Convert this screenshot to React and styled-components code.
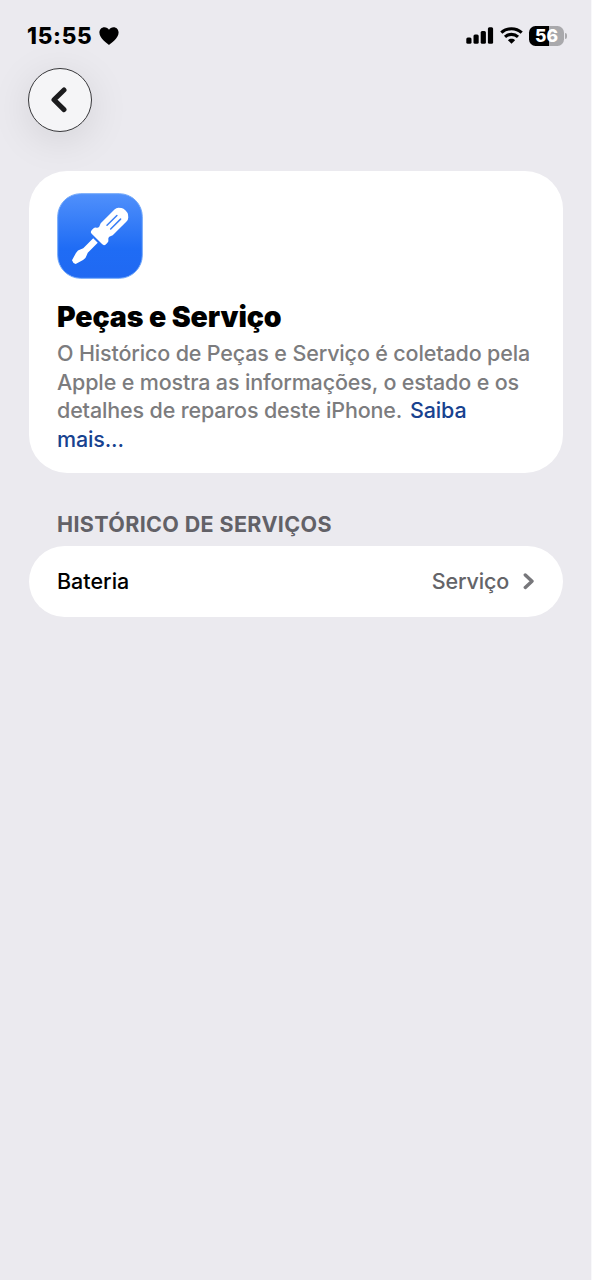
import React from "react";
import styled, { createGlobalStyle } from "styled-components";

const GlobalStyle = createGlobalStyle`
  * { box-sizing: border-box; }
  body { margin: 0; background: #ebeaef; }
`;

const Screen = styled.main`
  min-height: 1280px;
  padding: 0 28px 0 29px;
  background: #ebeaef;
  border-right: 1px solid #f8f8fa;
  font-family: Inter, "Liberation Sans", sans-serif;
  color: #000;
`;

const StatusBar = styled.header`
  display: flex;
  justify-content: space-between;
  align-items: center;
  height: 68px;
  padding-top: 3px;
  margin: 0 -4px 0 -2px;
`;

const StatusGroup = styled.div`
  display: flex;
  align-items: center;
  gap: ${(p) => p.$gap}px;
`;

const Clock = styled.time`
  font-size: 22.5px;
  line-height: 28px;
  font-weight: 800;
  letter-spacing: 0.7px;
`;

const Battery = styled.div`
  display: flex;
  align-items: center;
  gap: 1px;
`;

const BatteryBody = styled.div`
  width: 35px;
  height: 20px;
  border-radius: 6.5px;
  background: linear-gradient(90deg, #000 56%, #a9a9ac 56%);
  color: #fff;
  font-size: 17.5px;
  line-height: 20px;
  font-weight: 800;
  text-align: center;
`;

const BatteryCap = styled.div`
  width: 2px;
  height: 6px;
  border-radius: 0 2px 2px 0;
  background: #a9a9ac;
`;

const BackButton = styled.button`
  display: flex;
  align-items: center;
  justify-content: center;
  width: 64px;
  height: 64px;
  margin: 0 0 39px -1px;
  padding: 0 3px 0 0;
  border: 1.5px solid #38383b;
  border-radius: 50%;
  background: #f5f5f7;
  box-shadow: 0 8px 40px rgba(0, 0, 0, 0.1);
`;

const Card = styled.section`
  height: 302px;
  padding: 22px 28px 0;
  border-radius: 38px;
  background: #fff;
`;

const AppIcon = styled.svg`
  display: block;
  width: 86px;
  height: 86px;
`;

const Title = styled.h1`
  margin: 20px 0 0;
  font-size: 28.5px;
  line-height: 36px;
  font-weight: 900;
  letter-spacing: -0.1px;
`;

const Description = styled.p`
  margin: 4px -10px 0 0;
  color: #7c7c7e;
  font-size: 21.5px;
  line-height: 28.5px;
  font-weight: 500;
  letter-spacing: -0.15px;
  white-space: nowrap;
`;

const Link = styled.a`
  margin-left: ${(p) => (p.$inline ? 2.5 : 0)}px;
  color: #18428f;
`;

const SectionTitle = styled.h2`
  margin: 38px 28px 8px;
  color: #626167;
  font-size: 21.5px;
  line-height: 27px;
  font-weight: 700;
  letter-spacing: 0.36px;
`;

const Row = styled.div`
  display: flex;
  align-items: center;
  height: 71px;
  padding: 0 28px;
  border-radius: 36px;
  background: #fff;
  font-size: 21.5px;
  line-height: 27px;
  font-weight: 500;
`;

const RowValue = styled.span`
  margin-left: auto;
  margin-right: 14px;
  color: #646468;
  letter-spacing: -0.15px;
`;

function Heart() {
  return (
    <svg width="20" height="18" viewBox="0 0 20 18">
      <path d="M10 18C8.5 17 0.4 11.5 0.4 5.6C0.4 2.3 2.7 0.2 5.4 0.2C7.5 0.2 9.1 1.2 10 2.8C10.9 1.2 12.5 0.2 14.6 0.2C17.3 0.2 19.6 2.3 19.6 5.6C19.6 11.5 11.5 17 10 18Z" />
    </svg>
  );
}

function Signal() {
  return (
    <svg width="28" height="17" viewBox="0 0 28 17">
      <rect x="0.3" y="10.5" width="5.2" height="6.3" rx="1.5" />
      <rect x="7.5" y="7.5" width="5.2" height="9.3" rx="1.5" />
      <rect x="14.7" y="4" width="5.2" height="12.8" rx="1.5" />
      <rect x="21.9" y="0.3" width="5.2" height="16.5" rx="1.5" />
    </svg>
  );
}

function Wifi() {
  return (
    <svg width="23" height="17" viewBox="0 0 23 17">
      <g fill="none" stroke="#000" strokeWidth="3.1">
        <path d="M1.3 5.7C7 0.4 16 0.4 21.7 5.7" />
        <path d="M5 9.8C8.7 6.5 14.3 6.5 18 9.8" />
      </g>
      <path d="M11.5 16.8L7.9 13.2C9.8 11.4 13.2 11.4 15.1 13.2Z" />
    </svg>
  );
}

function Screwdriver() {
  return (
    <AppIcon viewBox="0 0 86 86">
      <defs>
        <linearGradient id="iconFill" x1="0" y1="0" x2="0" y2="1">
          <stop offset="0" stopColor="#5090fb" />
          <stop offset="0.65" stopColor="#1f6cf5" />
          <stop offset="1" stopColor="#2069f2" />
        </linearGradient>
      </defs>
      <rect x="0.7" y="0.7" width="84.6" height="84.6" rx="23" fill="url(#iconFill)" stroke="#72a8fa" strokeWidth="1" />
      <g transform="translate(43 43) rotate(-45)">
        <path
          fill="#fff"
          d="M-37 -2.6L-29 -5Q-25.5 -5.8 -23.5 -4.4L-20.5 -3.2H-6.4V3.2H-20.5L-23.5 4.4Q-25.5 5.8 -29 5L-37 2.6Q-38.5 0 -37 -2.6Z"
        />
        <path
          fill="#fff"
          d="M-4.3 -7.5Q-4.3 -10 -1.5 -10H0.5Q2.6 -10 3.5 -8.3Q4.3 -7 6 -7.1L9.5 -8.5H29Q31.5 -8.5 33 -7L35 -4.6Q36.2 -3 36.2 0Q36.2 3 35 4.6L33 7Q31.5 8.5 29 8.5H9.5L6 7.1Q4.3 7 3.5 8.3Q2.6 10 0.5 10H-1.5Q-4.3 10 -4.3 7.5Z"
        />
        <path d="M12.5 -2.6H26.5M12.5 2.6H26.5" stroke="#3b7ff6" strokeWidth="1.5" strokeLinecap="round" />
      </g>
    </AppIcon>
  );
}

export default function App() {
  return (
    <>
      <GlobalStyle />
      <Screen>
        <StatusBar>
          <StatusGroup $gap={6.5}>
            <Clock>15:55</Clock>
            <Heart />
          </StatusGroup>
          <StatusGroup $gap={6}>
            <Signal />
            <Wifi />
            <Battery>
              <BatteryBody>56</BatteryBody>
              <BatteryCap />
            </Battery>
          </StatusGroup>
        </StatusBar>
        <BackButton aria-label="Voltar">
          <svg width="18" height="26" viewBox="0 0 18 26" fill="none" stroke="#1b1b1d" strokeWidth="5" strokeLinecap="round" strokeLinejoin="round">
            <path d="M14 3L4 12.8L14 22.6" />
          </svg>
        </BackButton>
        <Card>
          <Screwdriver />
          <Title>Peças e Serviço</Title>
          <Description>
            O Histórico de Peças e Serviço é coletado pela
            <br />
            Apple e mostra as informações, o estado e os
            <br />
            detalhes de reparos deste iPhone. <Link $inline>Saiba</Link>
            <br />
            <Link>mais...</Link>
          </Description>
        </Card>
        <SectionTitle>HISTÓRICO DE SERVIÇOS</SectionTitle>
        <Row>
          <span>Bateria</span>
          <RowValue>Serviço</RowValue>
          <svg width="12" height="17" viewBox="0 0 12 17" fill="none" stroke="#77777b" strokeWidth="3.4" strokeLinecap="round" strokeLinejoin="round">
            <path d="M2.3 2L9 8.2L2.3 14.4" />
          </svg>
        </Row>
      </Screen>
    </>
  );
}
